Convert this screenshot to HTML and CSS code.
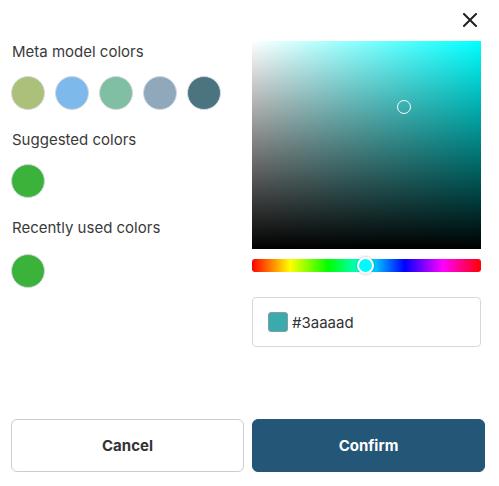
FILE: index.html
```html
<!DOCTYPE html>
<html>
<head>
<meta charset="utf-8">
<link rel="stylesheet" href="styles.css">
</head>
<body>
<div class="dialog">
  <div class="topbar">
    <button class="close" aria-label="Close">
      <svg width="14" height="14" viewBox="0 0 14 14"><path d="M1 1L13 13M13 1L1 13" stroke="#222" stroke-width="2" stroke-linecap="square"/></svg>
    </button>
  </div>
  <div class="content">
    <div class="left">
      <div class="label">Meta model colors</div>
      <div class="swatches first">
        <span class="sw" style="background:#abc17a"></span>
        <span class="sw" style="background:#7db9ea"></span>
        <span class="sw" style="background:#80bfa3"></span>
        <span class="sw" style="background:#8fa8bc"></span>
        <span class="sw" style="background:#4a7580"></span>
      </div>
      <div class="label">Suggested colors</div>
      <div class="swatches">
        <span class="sw" style="background:#3bb33b"></span>
      </div>
      <div class="label">Recently used colors</div>
      <div class="swatches last">
        <span class="sw" style="background:#3bb33b"></span>
      </div>
    </div>
    <div class="right">
      <div class="sat">
        <span class="cursor"></span>
      </div>
      <div class="hue">
        <span class="thumb"></span>
      </div>
      <div class="hexinput">
        <span class="chip"></span>
        <span class="hex">#3aaaad</span>
      </div>
    </div>
  </div>
  <div class="footer">
    <button class="btn cancel">Cancel</button>
    <button class="btn confirm">Confirm</button>
  </div>
</div>
</body>
</html>
```

FILE: styles.css
```css
* { box-sizing: border-box; }
html, body { margin: 0; padding: 0; background: #fff; }
body { font-family: Inter, "Noto Sans", sans-serif; color: #333; }
.dialog { width: 499px; height: 486px; padding: 13px 14px 0 11px; display: flex; flex-direction: column; }
.topbar { display: flex; justify-content: flex-end; height: 28px; padding-right: 8px; }
.close { border: 0; background: none; padding: 0; width: 14px; height: 14px; cursor: pointer; display: block; }
.close svg { display: block; }
.content { display: grid; grid-template-columns: 233px 229px; column-gap: 8px; }
.left { display: flex; flex-direction: column; padding-top: 1px; }
.label { font-size: 15px; line-height: 20px; height: 20px; padding-left: 1px; color: #3a3a3a; }
.swatches { display: flex; gap: 10px; margin: 14px 0 20px; }
.swatches.last { margin-top: 16px; }
.sw { width: 34px; height: 34px; border-radius: 50%; border: 1px solid #d4d8de; display: block; }
.right { display: flex; flex-direction: column; }
.sat { position: relative; height: 208px; background: linear-gradient(to top, #000, rgba(0,0,0,0)), linear-gradient(to right, #fff, #00ffff); }
.cursor { position: absolute; left: 145px; top: 59px; width: 14px; height: 14px; border-radius: 50%; border: 1.5px solid #fff; }
.hue { position: relative; margin-top: 10px; height: 13px; border-radius: 3px; background: linear-gradient(to right, #f00 0%, #ff0 16.66%, #0f0 33.33%, #0ff 50%, #00f 66.66%, #f0f 83.33%, #f00 100%); }
.thumb { position: absolute; left: 105px; top: -2px; width: 17px; height: 17px; border-radius: 50%; background: #00f8ff; border: 2px solid #fff; box-shadow: 0 0 3px rgba(0,0,0,0.3); }
.hexinput { margin-top: 25px; height: 50px; border: 1px solid #d3d8e0; border-radius: 4px; display: flex; align-items: center; padding-left: 15px; gap: 4px; }
.chip { width: 20px; height: 20px; border-radius: 3px; background: #3aaaad; border: 1px solid #8a9aa0; display: block; }
.hex { font-size: 15px; color: #333; }
.footer { margin-top: 72px; display: grid; grid-template-columns: 233px 233px; column-gap: 8px; }
.btn { height: 53px; border-radius: 6px; font-family: Inter, "Noto Sans", sans-serif; font-size: 15px; font-weight: 700; cursor: pointer; }
.cancel { background: #fff; border: 1px solid #c9ccd2; color: #333; }
.confirm { background: #235677; border: 1px solid #235677; color: #fff; }
```
